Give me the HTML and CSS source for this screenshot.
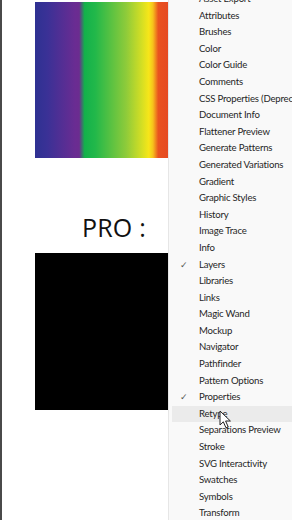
FILE: index.html
```html
<!DOCTYPE html>
<html lang="en">
  <head>
    <meta charset="UTF-8" />
    <meta name="viewport" content="width=device-width, initial-scale=1.0" />
    <title>Window menu</title>
    <link rel="stylesheet" href="styles.css">
  </head>
  <body>
    <div class="screen">
      <div class="canvas">
        <div class="swatch rainbow"></div>
        <div class="label">PRO :</div>
        <div class="swatch black"></div>
      </div>

      <ul class="menu">
        <li>Asset Export</li>
        <li>Attributes</li>
        <li>Brushes</li>
        <li>Color</li>
        <li>Color Guide</li>
        <li>Comments</li>
        <li>CSS Properties (Deprecated)</li>
        <li>Document Info</li>
        <li>Flattener Preview</li>
        <li>Generate Patterns</li>
        <li>Generated Variations</li>
        <li>Gradient</li>
        <li>Graphic Styles</li>
        <li>History</li>
        <li>Image Trace</li>
        <li>Info</li>
        <li class="checked">Layers</li>
        <li>Libraries</li>
        <li>Links</li>
        <li>Magic Wand</li>
        <li>Mockup</li>
        <li>Navigator</li>
        <li>Pathfinder</li>
        <li>Pattern Options</li>
        <li class="checked">Properties</li>
        <li class="hover">Retype
          <svg class="pointer" width="13" height="19" viewBox="0 0 13 19">
            <path d="M1 1 L1 15 L4.3 11.8 L7 17.8 L9.2 16.8 L6.6 11 L11.4 11 Z" fill="#fff" stroke="#222" stroke-width="1" stroke-linejoin="round"/>
          </svg>
        </li>
        <li>Separations Preview</li>
        <li>Stroke</li>
        <li>SVG Interactivity</li>
        <li>Swatches</li>
        <li>Symbols</li>
        <li>Transform</li>
      </ul>
    </div>
  </body>
</html>
```

FILE: styles.css
```css
body {
  margin: 0;
  background: #ffffff;
  font-family: "Open Sans", "Noto Sans", sans-serif;
  overflow: hidden;
}

.screen {
  display: flex;
  width: 292px;
  height: 520px;
  overflow: hidden;
}

.canvas {
  width: 168px;
  flex-shrink: 0;
  border-left: 2px solid #4a4a4a;
  padding-left: 33px;
  box-sizing: border-box;
  background: #ffffff;
}

.swatch {
  width: 134px;
}

.rainbow {
  height: 156px;
  margin-top: 2px;
  background: linear-gradient(
    to right,
    #2e3192 0%,
    #3a3196 9%,
    #6a2c92 30%,
    #6b2c90 33%,
    #13b14b 37%,
    #22b84a 45%,
    #8ecb3a 68%,
    #d6df23 80%,
    #f7e619 85%,
    #f7c11c 88%,
    #e9521f 92%,
    #e54a22 100%
  );
}

.label {
  height: 95px;
  padding-left: 47px;
  padding-top: 57px;
  box-sizing: border-box;
  font-size: 25px;
  line-height: 25px;
  font-weight: 500;
  color: #111111;
  letter-spacing: 0.2px;
}

.black {
  height: 157px;
  background: #000000;
}

.menu {
  flex: 1;
  list-style: none;
  margin: 0;
  padding: 0;
  margin-top: -9px;
  background: #f9f9f9;
  border-left: 1px solid #e6e6e6;
  font-family: "Lato", "Noto Sans", sans-serif;
  font-size: 9.6px;
  letter-spacing: -0.2px;
  color: #262626;
}

.menu li {
  position: relative;
  height: 16.6px;
  line-height: 16.6px;
  padding-left: 27px;
  margin-left: 3px;
  white-space: nowrap;
}

.menu li.checked::before {
  content: "✓";
  position: absolute;
  left: 8px;
  top: 0;
  font-family: "DejaVu Sans", sans-serif;
  font-size: 9px;
  color: #555555;
}

.menu li.hover {
  background: #ebebeb;
}

.pointer {
  position: absolute;
  left: 47px;
  top: 4px;
}
```
